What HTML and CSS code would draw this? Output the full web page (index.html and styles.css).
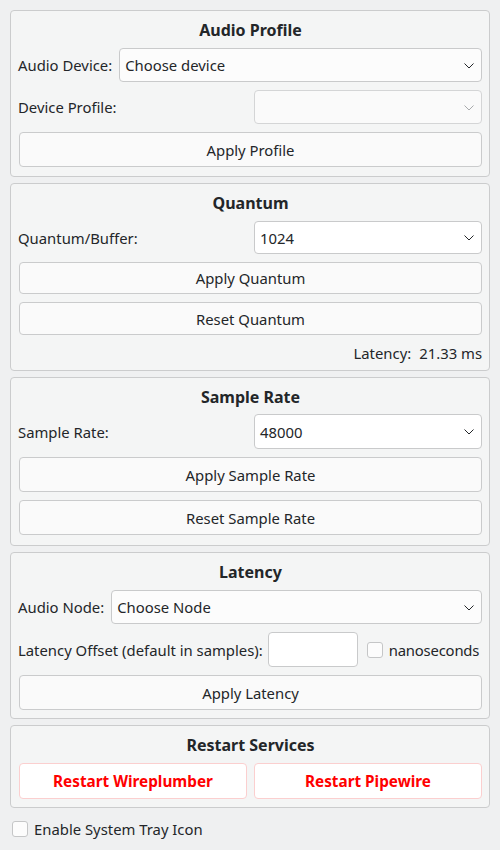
FILE: index.html
```html
<!DOCTYPE html>
<html>
<head>
<meta charset="utf-8">
<link rel="stylesheet" href="styles.css">
</head>
<body>
<div class="app">
  <section class="group g1">
    <div class="title">Audio Profile</div>
    <div class="row">
      <span class="label">Audio Device:</span>
      <div class="combo grow h34">
        <span>Choose device</span>
        <svg class="chev" width="10" height="6" viewBox="0 0 10 6"><path d="M0.5 0.5 L5 5 L9.5 0.5" fill="none" stroke="#232629" stroke-width="1"/></svg>
      </div>
    </div>
    <div class="grid2">
      <span class="label">Device Profile:</span>
      <div class="combo disabled h34">
        <span></span>
        <svg class="chev" width="10" height="6" viewBox="0 0 10 6"><path d="M0.5 0.5 L5 5 L9.5 0.5" fill="none" stroke="#a8aaac" stroke-width="1"/></svg>
      </div>
    </div>
    <button class="btn h35">Apply Profile</button>
  </section>

  <section class="group g2">
    <div class="title">Quantum</div>
    <div class="grid2">
      <span class="label">Quantum/Buffer:</span>
      <div class="combo white h33">
        <span>1024</span>
        <svg class="chev" width="10" height="6" viewBox="0 0 10 6"><path d="M0.5 0.5 L5 5 L9.5 0.5" fill="none" stroke="#232629" stroke-width="1"/></svg>
      </div>
    </div>
    <button class="btn h32">Apply Quantum</button>
    <button class="btn h33">Reset Quantum</button>
    <div class="latinfo"><span>Latency:</span><span>21.33 ms</span></div>
  </section>

  <section class="group g3">
    <div class="title">Sample Rate</div>
    <div class="grid2">
      <span class="label">Sample Rate:</span>
      <div class="combo white h35">
        <span>48000</span>
        <svg class="chev" width="10" height="6" viewBox="0 0 10 6"><path d="M0.5 0.5 L5 5 L9.5 0.5" fill="none" stroke="#232629" stroke-width="1"/></svg>
      </div>
    </div>
    <button class="btn h35">Apply Sample Rate</button>
    <button class="btn h35">Reset Sample Rate</button>
  </section>

  <section class="group g4">
    <div class="title">Latency</div>
    <div class="row">
      <span class="label">Audio Node:</span>
      <div class="combo grow h34">
        <span>Choose Node</span>
        <svg class="chev" width="10" height="6" viewBox="0 0 10 6"><path d="M0.5 0.5 L5 5 L9.5 0.5" fill="none" stroke="#232629" stroke-width="1"/></svg>
      </div>
    </div>
    <div class="row offset">
      <span class="label">Latency Offset (default in samples):</span>
      <div class="input"></div>
      <span class="check"></span>
      <span class="label">nanoseconds</span>
    </div>
    <button class="btn h35">Apply Latency</button>
  </section>

  <section class="group g5">
    <div class="title">Restart Services</div>
    <div class="grid2">
      <button class="btn danger h36">Restart Wireplumber</button>
      <button class="btn danger h36">Restart Pipewire</button>
    </div>
  </section>

  <div class="tray">
    <span class="check"></span>
    <span class="label">Enable System Tray Icon</span>
  </div>
</div>
</body>
</html>
```

FILE: styles.css
```css
* { box-sizing: border-box; }

html, body {
  margin: 0;
  padding: 0;
  background: #eff0f1;
}

body {
  font-family: "Noto Sans", "DejaVu Sans", sans-serif;
  font-size: 14.85px;
  color: #232629;
  width: 500px;
  height: 850px;
  overflow: hidden;
}

.app {
  display: flex;
  flex-direction: column;
  gap: 6px;
  padding: 10px 10px 0 10px;
}

.group {
  width: 480px;
  background: #f4f5f5;
  border: 1px solid #cbcccd;
  border-radius: 4px;
  padding: 9px 7px 9px 8px;
  display: flex;
  flex-direction: column;
  gap: 8px;
}

.g2 { padding-bottom: 7px; }
.g3 { padding-bottom: 10px; }
.g3 .grid2 { margin-top: -1px; }
.g4, .g5 { padding-bottom: 8px; }

.title {
  height: 20px;
  line-height: 20px;
  text-align: center;
  font-weight: bold;
  font-size: 16px;
}

.row {
  display: flex;
  align-items: center;
  gap: 7px;
}

.label {
  white-space: nowrap;
  line-height: 20px;
}

.row .label:first-child { margin-left: -1px; }
.grid2 > .label:first-child { margin-left: -1px; }

.grid2 {
  display: grid;
  grid-template-columns: 1fr 1fr;
  column-gap: 7px;
  align-items: center;
}

.grow { flex: 1; }

.combo {
  display: flex;
  align-items: center;
  justify-content: space-between;
  background: #fcfcfc;
  border: 1px solid #c9cacb;
  border-radius: 4px;
  padding: 0 7px 0 5px;
}

.combo.white { background: #ffffff; }
.combo.disabled { background: #fafafa; border-color: #d4d5d6; }

.chev { display: block; margin-top: 1px; }

.btn {
  display: flex;
  align-items: center;
  justify-content: center;
  width: 100%;
  font-family: inherit;
  font-size: 14.85px;
  color: #232629;
  background: #fafafa;
  border: 1px solid #cacbcc;
  border-radius: 4px;
  padding: 0;
  margin: 0;
}

.btn.danger {
  background: #ffffff;
  border-color: #fbcfcf;
  color: #ff0000;
  font-weight: bold;
  font-size: 15.3px;
}

.h32 { height: 32px; }
.h33 { height: 33px; }
.h34 { height: 34px; }
.h35 { height: 35px; }
.h36 { height: 36px; }

.latinfo {
  display: flex;
  justify-content: flex-end;
  gap: 8px;
  height: 20px;
  line-height: 20px;
}

.offset { gap: 0; }
.offset .label:last-child { letter-spacing: -0.2px; }
.offset .input {
  width: 90px;
  height: 35px;
  margin-left: 5px;
  background: #ffffff;
  border: 1px solid #c9cacb;
  border-radius: 4px;
}
.offset .check { margin-left: 9px; margin-right: 6px; }

.check {
  display: inline-block;
  width: 16px;
  height: 16px;
  background: #fcfcfc;
  border: 1px solid #c5c6c7;
  border-radius: 3px;
  flex: none;
}

.tray {
  display: flex;
  align-items: center;
  gap: 6px;
  padding: 5px 0 0 2px;
}
```
